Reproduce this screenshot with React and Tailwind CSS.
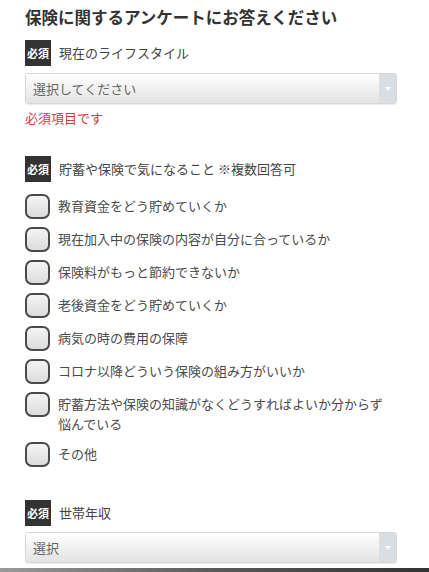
const Badge = () => (
  <span className="inline-flex items-center justify-center w-[26px] h-[26px] bg-[#333333] text-white text-[11px] font-bold leading-none shrink-0">
    必須
  </span>
);

const FieldLabel = ({ children }) => (
  <div className="flex items-center gap-[8px]">
    <Badge />
    <span className="text-[13px] text-[#444444]">{children}</span>
  </div>
);

const SelectBox = ({ placeholder }) => (
  <div className="flex h-[31px] w-[372px] rounded-[3px] border border-[#d6d6d6] overflow-hidden shadow-[0_1px_1px_rgba(0,0,0,0.08)]">
    <div className="flex-1 flex items-center pl-[7px] text-[13px] text-[#666666] bg-gradient-to-b from-[#ffffff] to-[#e3e3e3]">
      {placeholder}
    </div>
    <div className="w-[17px] flex items-center justify-center bg-[#d9dee3]">
      <span className="block w-0 h-0 border-l-[3px] border-r-[3px] border-t-[4px] border-l-transparent border-r-transparent border-t-white" />
    </div>
  </div>
);

const options = [
  '教育資金をどう貯めていくか',
  '現在加入中の保険の内容が自分に合っているか',
  '保険料がもっと節約できないか',
  '老後資金をどう貯めていくか',
  '病気の時の費用の保障',
  'コロナ以降どういう保険の組み方がいいか',
  '貯蓄方法や保険の知識がなくどうすればよいか分からず悩んでいる',
  'その他',
];

export default function App() {
  return (
    <div
      className="w-[429px] h-[572px] bg-white flex flex-col overflow-hidden"
      style={{ fontFamily: '"Noto Sans CJK JP", "Noto Sans", sans-serif' }}
    >
      <div className="flex-1 pl-[25px] pt-[5px]">
        <h1 className="text-[16.5px] font-bold text-[#333333] leading-[24px]">
          保険に関するアンケートにお答えください
        </h1>

        <div className="mt-[11px]">
          <FieldLabel>現在のライフスタイル</FieldLabel>
        </div>
        <div className="mt-[7px]">
          <SelectBox placeholder="選択してください" />
        </div>
        <p className="mt-[4px] text-[13px] text-[#d9363e] leading-[20px]">必須項目です</p>

        <div className="mt-[28px]">
          <FieldLabel>貯蓄や保険で気になること ※複数回答可</FieldLabel>
        </div>

        <ul className="mt-[12px] flex flex-col gap-[8px]">
          {options.map((opt) => (
            <li key={opt} className="flex items-start gap-[8px]">
              <span className="block w-[25px] h-[25px] shrink-0 rounded-[7px] border-[2px] border-[#4a4a4a] bg-gradient-to-b from-[#f4f4f4] to-[#dcdcdc]" />
              <span className="w-[330px] pt-[2px] text-[13px] leading-[20px] text-[#4a4a4a]">{opt}</span>
            </li>
          ))}
        </ul>

        <div className="mt-[33px]">
          <FieldLabel>世帯年収</FieldLabel>
        </div>
        <div className="mt-[6px]">
          <SelectBox placeholder="選択" />
        </div>
      </div>
      <div className="h-[4px] bg-gradient-to-r from-[#9a9a9a] via-[#5a5a5a] to-[#333333]" />
    </div>
  );
}
